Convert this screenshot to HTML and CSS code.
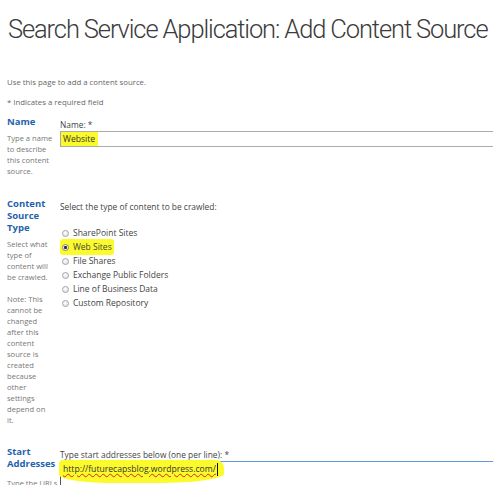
FILE: index.html
```html
<!DOCTYPE html>
<html lang="en">

<head>
    <meta charset="UTF-8">
    <link rel="stylesheet" href="styles.css">
    <title>Add Content Source</title>
</head>

<body>
    <h1 class="page-title">Search Service Application: Add Content Source</h1>
    <p class="intro">Use this page to add a content source.</p>
    <p class="required-note">* Indicates a required field</p>

    <!-- Name -->
    <div class="section">
        <div class="section-info">
            <h3>Name</h3>
            <p>Type a name<br>to describe<br>this content<br>source.</p>
        </div>
        <div class="section-body">
            <div class="field-label">Name: *</div>
            <div class="text-field"><span class="hl">Website</span></div>
        </div>
    </div>

    <!-- Content Source Type -->
    <div class="section section-type">
        <div class="section-info">
            <h3>Content<br>Source<br>Type</h3>
            <p>Select what<br>type of<br>content will<br>be crawled.</p>
            <p>Note: This<br>cannot be<br>changed<br>after this<br>content<br>source is<br>created<br>because<br>other<br>settings<br>depend on<br>it.</p>
        </div>
        <div class="section-body">
            <div class="field-label">Select the type of content to be crawled:</div>
            <ul class="radio-list">
                <li><span class="radio"></span>SharePoint Sites</li>
                <li><span class="hl hl-radio"><span class="radio checked"></span>Web Sites</span></li>
                <li><span class="radio"></span>File Shares</li>
                <li><span class="radio"></span>Exchange Public Folders</li>
                <li><span class="radio"></span>Line of Business Data</li>
                <li><span class="radio"></span>Custom Repository</li>
            </ul>
        </div>
    </div>

    <!-- Start Addresses -->
    <div class="section section-start">
        <div class="section-info">
            <h3>Start<br>Addresses</h3>
            <p>Type the URLs<br>from which the<br>search system<br>should start<br>crawling.</p>
        </div>
        <div class="section-body">
            <div class="field-label">Type start addresses below (one per line): *</div>
            <div class="text-area">
                <span class="hl-blob"><span class="spell">http://futurecapsblog.wordpress.com/</span><span class="caret"></span></span>
            </div>
        </div>
    </div>
</body>

</html>
```

FILE: styles.css
```css
html,
body {
    margin: 0;
    padding: 0;
    overflow: hidden;
}

body {
    font-family: "Open Sans", "Noto Sans", sans-serif;
    color: #444;
    background-color: #fff;
    padding-left: 7px;
    width: 486px;
    height: 485px;
}

.page-title {
    font-family: Roboto, "Open Sans", sans-serif;
    font-size: 25.5px;
    font-weight: 300;
    letter-spacing: -1.12px;
    line-height: 34px;
    color: #3b3b3b;
    margin: 12px 0 0 1px;
    white-space: nowrap;
}

.intro,
.required-note {
    font-size: 7.8px;
    line-height: 11px;
    color: #666;
    margin: 0;
}

.intro {
    margin-top: 31px;
}

.required-note {
    margin-top: 9px;
}

/* sections: description on the left, fields on the right */
.section {
    display: flex;
    margin-top: 8px;
}

.section-type {
    margin-top: 21px;
}

.section-start {
    margin-top: 20px;
}

.section-info {
    width: 53px;
    flex-shrink: 0;
}

.section-info h3 {
    font-size: 9.5px;
    font-weight: bold;
    line-height: 12px;
    color: #1f62ae;
    margin: 0;
}

.section-info p {
    font-size: 7.6px;
    line-height: 11px;
    color: #777;
    margin: 5px 0 0 0;
}

.section-info p + p {
    margin-top: 11px;
}

.section-start .section-info p {
    margin-top: 8px;
}

.section-body {
    flex: 1;
    padding-top: 3px;
}

.field-label {
    font-size: 8.4px;
    line-height: 12px;
    color: #444;
}

.text-field {
    height: 14px;
    border: 1px solid #ababab;
    border-right: none;
    font-size: 8.6px;
    line-height: 14px;
    color: #333;
}

.hl {
    background-color: #fbfb2c;
    display: inline-block;
}

.text-field .hl {
    padding: 0 3px 0 2px;
}

.radio-list {
    list-style: none;
    margin: 13px 0 0 0;
    padding: 0;
}

.radio-list li {
    font-size: 8.5px;
    line-height: 14px;
    height: 14px;
    color: #444;
    display: flex;
    align-items: center;
    padding-left: 2px;
}

.hl-radio {
    display: flex;
    align-items: center;
    margin-left: -2px;
    padding: 1px 2px;
    border-radius: 3px;
}

.radio {
    display: inline-block;
    width: 5px;
    height: 5px;
    border: 1px solid #a5a5a5;
    border-radius: 50%;
    background: radial-gradient(circle at 40% 35%, #fff, #dcdcdc);
    margin-right: 4px;
}

.radio.checked {
    background: radial-gradient(circle, #333 0, #333 1.3px, #eee 1.8px);
    border-color: #888;
}

.text-area {
    height: 30px;
    border-top: 1px solid #5d9ad7;
    border-left: 1px solid #555;
    font-size: 8.6px;
    line-height: 14px;
    color: #333;
}

.hl-blob {
    display: inline-flex;
    align-items: center;
    background-color: #fbfb2c;
    margin: -2px 0 0 -2px;
    padding: 2px 6px 7px 4px;
    border-radius: 4px 8px 40% 35%;
}

.spell {
    text-decoration: underline wavy #d22;
    text-decoration-thickness: 1px;
    text-underline-offset: 1px;
}

.caret {
    display: inline-block;
    width: 0;
    height: 13px;
    border-left: 1px solid #111;
    margin-left: 1px;
}
```
